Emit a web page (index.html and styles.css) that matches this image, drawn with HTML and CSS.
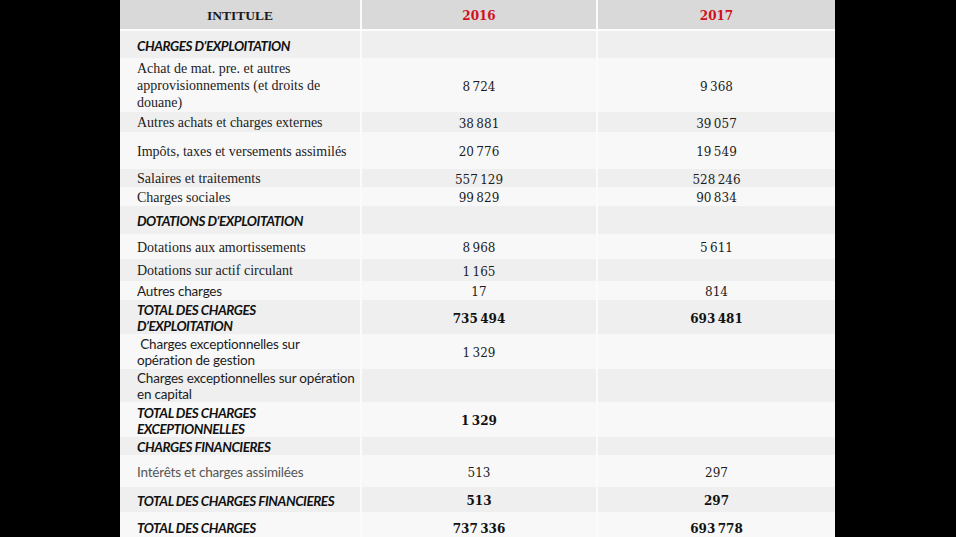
FILE: index.html
```html
<!DOCTYPE html>
<html lang="fr">
<head>
<meta charset="utf-8">
<link rel="stylesheet" href="styles.css">
</head>
<body>
<table class="charges">
  <colgroup><col class="c1"><col class="c2"><col class="c3"></colgroup>
  <thead>
    <tr class="head"><th class="lbl-h">INTITULE</th><th class="yr">2016</th><th class="yr">2017</th></tr>
  </thead>
  <tbody>
    <tr class="dk h28"><td class="sec">CHARGES D’EXPLOITATION</td><td></td><td></td></tr>
    <tr class="lt h54"><td class="lbl">Achat de mat. pre. et autres<br>approvisionnements (et droits de<br>douane)</td><td class="num">8&#8239;724</td><td class="num">9&#8239;368</td></tr>
    <tr class="dk h20"><td class="lbl">Autres achats et charges externes</td><td class="num">38&#8239;881</td><td class="num">39&#8239;057</td></tr>
    <tr class="lt h37"><td class="lbl">Impôts, taxes et versements assimilés</td><td class="num">20&#8239;776</td><td class="num">19&#8239;549</td></tr>
    <tr class="dk h18"><td class="lbl">Salaires et traitements</td><td class="num">557&#8239;129</td><td class="num">528&#8239;246</td></tr>
    <tr class="lt h19"><td class="lbl">Charges sociales</td><td class="num">99&#8239;829</td><td class="num">90&#8239;834</td></tr>
    <tr class="dk h28"><td class="sec">DOTATIONS D’EXPLOITATION</td><td></td><td></td></tr>
    <tr class="lt h25"><td class="lbl">Dotations aux amortissements</td><td class="num">8&#8239;968</td><td class="num">5&#8239;611</td></tr>
    <tr class="dk h22"><td class="lbl">Dotations sur actif circulant</td><td class="num">1&#8239;165</td><td></td></tr>
    <tr class="lt h19"><td class="sans">Autres charges</td><td class="num">17</td><td class="num">814</td></tr>
    <tr class="dk h34"><td class="sec">TOTAL DES CHARGES<br>D’EXPLOITATION</td><td class="num b">735&#8239;494</td><td class="num b">693&#8239;481</td></tr>
    <tr class="lt h35"><td class="sans">&nbsp;Charges exceptionnelles sur<br>opération de gestion</td><td class="num">1&#8239;329</td><td></td></tr>
    <tr class="dk h32"><td class="sans">Charges exceptionnelles sur opération<br>en capital</td><td></td><td></td></tr>
    <tr class="lt h35"><td class="sec">TOTAL DES CHARGES<br>EXCEPTIONNELLES</td><td class="num b">1&#8239;329</td><td></td></tr>
    <tr class="dk h18"><td class="sec">CHARGES FINANCIERES</td><td></td><td></td></tr>
    <tr class="lt h32"><td class="sans grey">Intérêts et charges assimilées</td><td class="num">513</td><td class="num">297</td></tr>
    <tr class="dk h25"><td class="sec">TOTAL DES CHARGES FINANCIERES</td><td class="num b">513</td><td class="num b">297</td></tr>
    <tr class="lt h30"><td class="sec">TOTAL DES CHARGES</td><td class="num b">737&#8239;336</td><td class="num b">693&#8239;778</td></tr>
  </tbody>
</table>
</body>
</html>
```

FILE: styles.css
```css
html, body {
  margin: 0;
  padding: 0;
  background: #000;
  height: 537px;
  overflow: hidden;
}
.charges {
  margin-left: 120px;
  width: 715px;
  table-layout: fixed;
  border-collapse: collapse;
  border-spacing: 0;
}
.c1 { width: 241px; }
.c2 { width: 236px; }
.c3 { width: 238px; }

.charges th, .charges td {
  box-sizing: border-box;
  padding: 0;
  vertical-align: middle;
  border-left: 2px solid #fbfbfb;
}
.charges th:first-child, .charges td:first-child { border-left: none; }

.head th {
  height: 30px;
  background: #d9d9d9;
  border-bottom: 2px solid #fdfdfd;
  text-align: center;
  font-weight: bold;
  padding-top: 3px;
}
.lbl-h {
  font-family: "Liberation Serif", serif;
  font-size: 13.5px;
  color: #1a1a1a;
}
.yr {
  font-family: "DejaVu Serif", serif;
  font-size: 12px;
  color: #d0111b;
}

.dk td { background: #efefef; }
.lt td { background: #f8f8f8; }

.h18 td { height: 18px; }
.h19 td { height: 19px; }
.h20 td { height: 20px; }
.h22 td { height: 22px; }
.h25 td { height: 25px; }
.h28 td { height: 28px; }
.h30 td { height: 30px; }
.h32 td { height: 32px; }
.h34 td { height: 34px; }
.h35 td { height: 35px; }
.h37 td { height: 37px; }
.h54 td { height: 54px; }

.lbl {
  font-family: "Liberation Serif", serif;
  font-size: 14px;
  line-height: 17px;
  color: #1c1c1c;
  padding-left: 17px !important;
  padding-top: 1px !important;
  white-space: nowrap;
}
.sans {
  font-family: Lato, "Open Sans", sans-serif;
  font-size: 13.5px;
  line-height: 16px;
  color: #1c1c1c;
  padding-left: 17px !important;
  padding-top: 1px !important;
  letter-spacing: -0.2px;
  white-space: nowrap;
}
.grey { color: #555; }
.sec {
  font-family: Lato, "Open Sans", sans-serif;
  font-size: 13.5px;
  line-height: 16px;
  font-weight: bold;
  font-style: italic;
  color: #111;
  padding-left: 17px !important;
  padding-top: 2px !important;
  letter-spacing: -0.45px;
  white-space: nowrap;
}
.num {
  font-family: "DejaVu Serif", serif;
  font-size: 12px;
  line-height: 14px;
  color: #1c1c1c;
  text-align: center;
  padding-top: 3px !important;
}
.num.b { font-weight: bold; color: #111; }
```
